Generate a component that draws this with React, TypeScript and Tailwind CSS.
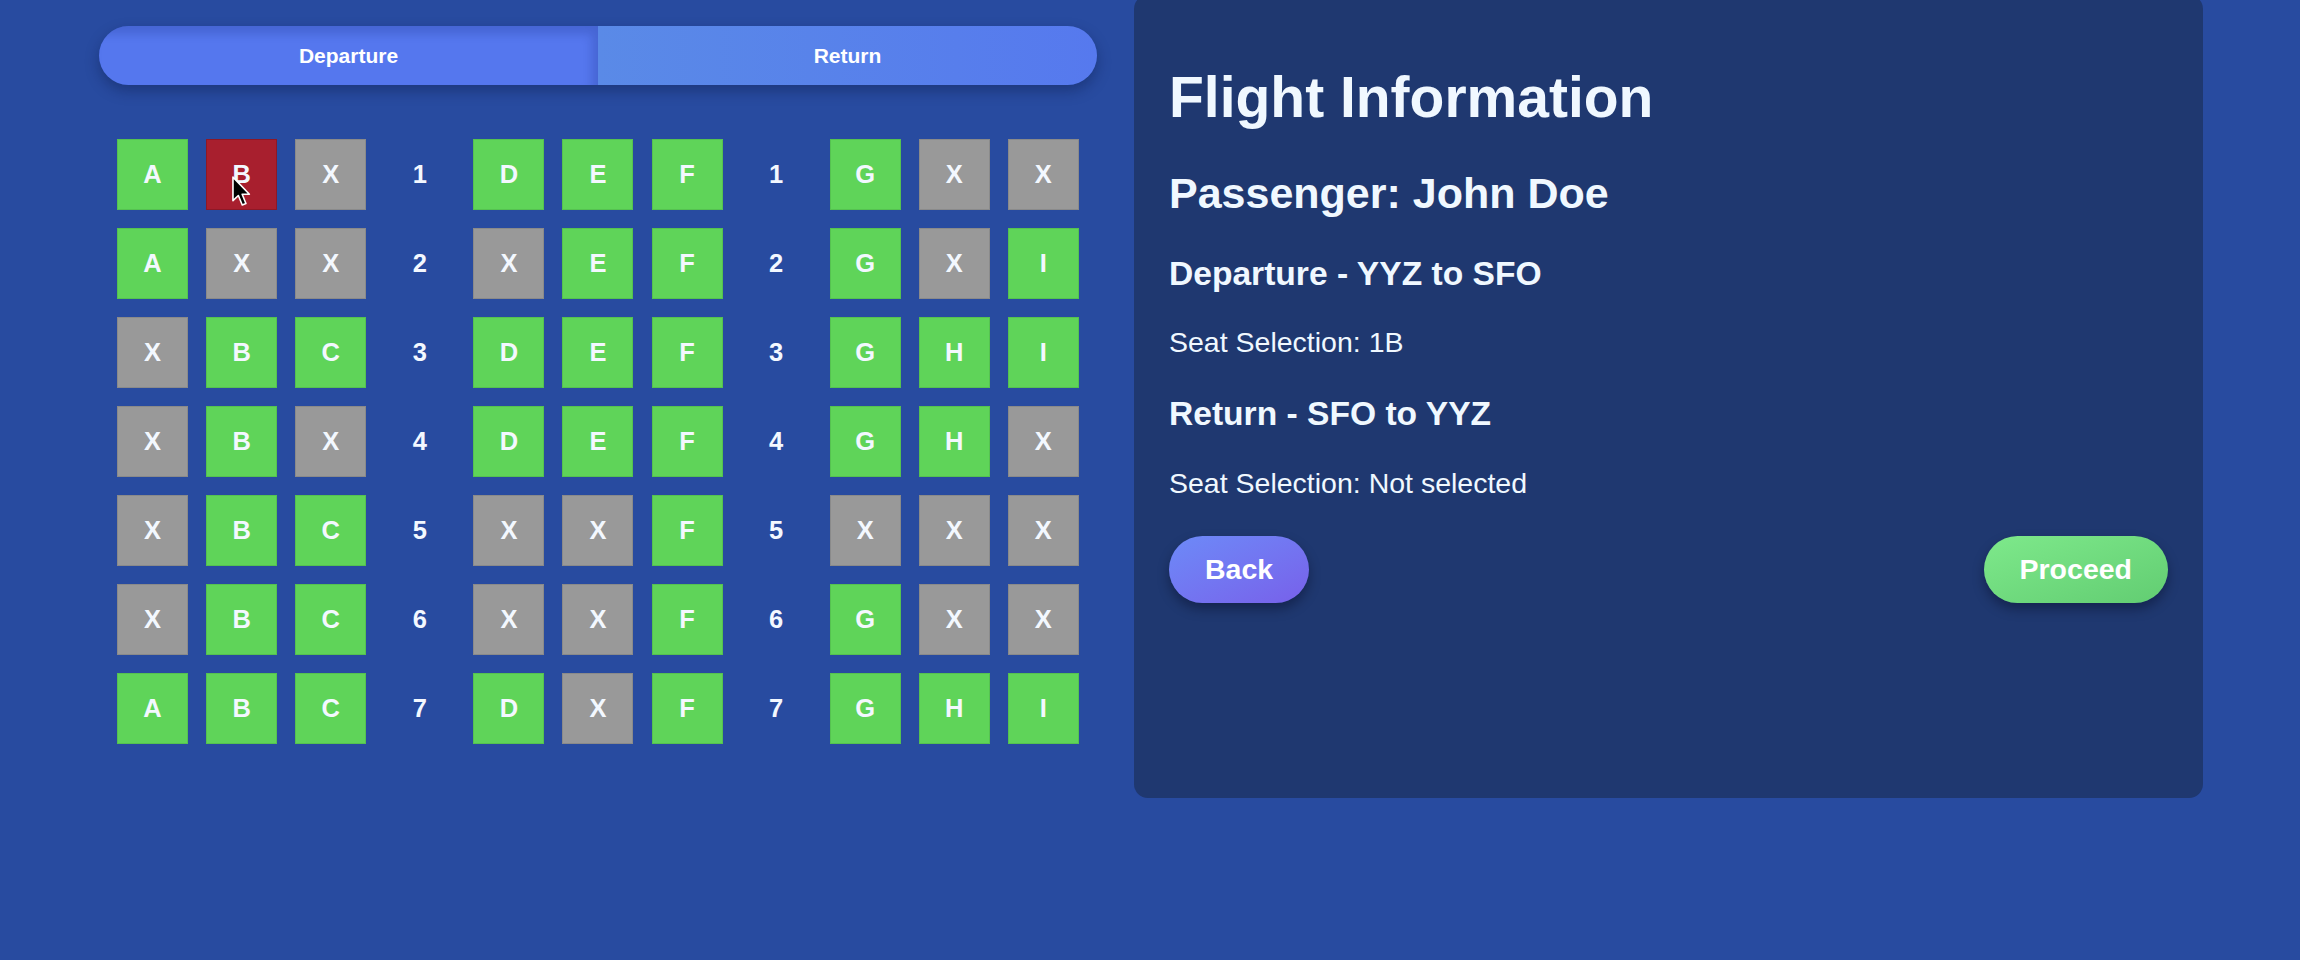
import React from "react";

type Seat = { label: string; taken: boolean; selected?: boolean };

const rows: string[][] = [
  ["A", "B", "X", "D", "E", "F", "G", "X", "X"],
  ["A", "X", "X", "X", "E", "F", "G", "X", "I"],
  ["X", "B", "C", "D", "E", "F", "G", "H", "I"],
  ["X", "B", "X", "D", "E", "F", "G", "H", "X"],
  ["X", "B", "C", "X", "X", "F", "X", "X", "X"],
  ["X", "B", "C", "X", "X", "F", "G", "X", "X"],
  ["A", "B", "C", "D", "X", "F", "G", "H", "I"],
];

const Cursor = () => (
  <svg className="absolute left-[24px] top-[36px] pointer-events-none" width="20" height="31" viewBox="0 0 17 27">
    <path d="M1.5 1 L1.5 21.5 L6.2 17 L9.6 25.2 L12.8 23.9 L9.5 15.9 L15.8 15.9 Z" fill="#000" stroke="#fff" strokeWidth="1.4" strokeLinejoin="round" />
  </svg>
);

const SeatBox = ({ seat }: { seat: Seat }) => {
  const color = seat.selected
    ? "bg-[#a81f2e] border-[#8e1826]"
    : seat.taken
    ? "bg-[#999999] border-[#8a8a8a]"
    : "bg-[#5fd459] border-[#55c250]";
  return (
    <div className={`relative w-[71px] h-[71px] border flex items-center justify-center text-[25.5px] font-bold text-[#f3f8ff] ${color}`}>
      {seat.label}
      {seat.selected && <Cursor />}
    </div>
  );
};

const RowNum = ({ n }: { n: number }) => (
  <div className="w-[71px] h-[71px] flex items-center justify-center text-[25.5px] font-bold text-[#f3f8ff]">{n}</div>
);

export default function App() {
  return (
    <div className="w-full h-[960px] overflow-hidden bg-[#284ba0] flex" style={{ fontFamily: '"Liberation Sans", Arial, sans-serif' }}>
      {/* Seat map column */}
      <div className="ml-[99px] w-[998px] pt-[26px] shrink-0">
        <div className="h-[59px] rounded-full overflow-hidden flex shadow-[0_6px_14px_rgba(10,20,60,0.35)]">
          <div className="flex-1 flex items-center justify-center bg-[#5577ee] shadow-[inset_-6px_8px_10px_rgba(20,40,120,0.22)] text-white font-bold text-[21px]">
            Departure
          </div>
          <div className="flex-1 flex items-center justify-center bg-gradient-to-r from-[#5a8ae7] to-[#5679ee] text-white font-bold text-[21px]">
            Return
          </div>
        </div>

        <div className="mt-[54px] flex flex-col gap-[18px]">
          {rows.map((r, i) => {
            const seats: Seat[] = r.map((l, j) => ({ label: l, taken: l === "X", selected: i === 0 && j === 1 }));
            return (
              <div key={i} className="flex justify-evenly">
                <SeatBox seat={seats[0]} />
                <SeatBox seat={seats[1]} />
                <SeatBox seat={seats[2]} />
                <RowNum n={i + 1} />
                <SeatBox seat={seats[3]} />
                <SeatBox seat={seats[4]} />
                <SeatBox seat={seats[5]} />
                <RowNum n={i + 1} />
                <SeatBox seat={seats[6]} />
                <SeatBox seat={seats[7]} />
                <SeatBox seat={seats[8]} />
              </div>
            );
          })}
        </div>
      </div>

      {/* Flight info panel */}
      <div className="ml-[37px] mt-[-5px] w-[1069px] h-[803px] shrink-0 rounded-[14px] bg-[#1f3870] pt-[35px] px-[35px] text-[#f0f8ff]">
        <h1 className="mt-[35px] text-[57px] leading-[64.4px] font-bold">Flight Information</h1>
        <h2 className="mt-[39.5px] text-[43px] leading-[48.3px] font-bold">Passenger: John Doe</h2>
        <h3 className="mt-[38px] text-[33.6px] leading-[38px] font-bold">Departure - YYZ to SFO</h3>
        <p className="mt-[32.7px] text-[28.5px] leading-[32.2px]">Seat Selection: 1B</p>
        <h3 className="mt-[37.2px] text-[33.6px] leading-[38px] font-bold">Return - SFO to YYZ</h3>
        <p className="mt-[33.7px] text-[28.5px] leading-[32.2px]">Seat Selection: Not selected</p>
        <div className="mt-[36.6px] flex justify-between">
          <button className="rounded-full px-[36px] py-[17.4px] text-[28.5px] leading-[32.2px] font-bold text-white bg-gradient-to-br from-[#6c8af8] to-[#7760ea] shadow-[0_6px_12px_rgba(0,0,20,0.35)]">
            Back
          </button>
          <button className="rounded-full px-[36px] py-[17.4px] text-[28.5px] leading-[32.2px] font-bold text-white bg-gradient-to-br from-[#7ee98b] to-[#62cd72] shadow-[0_6px_12px_rgba(0,0,20,0.35)]">
            Proceed
          </button>
        </div>
      </div>
    </div>
  );
}
